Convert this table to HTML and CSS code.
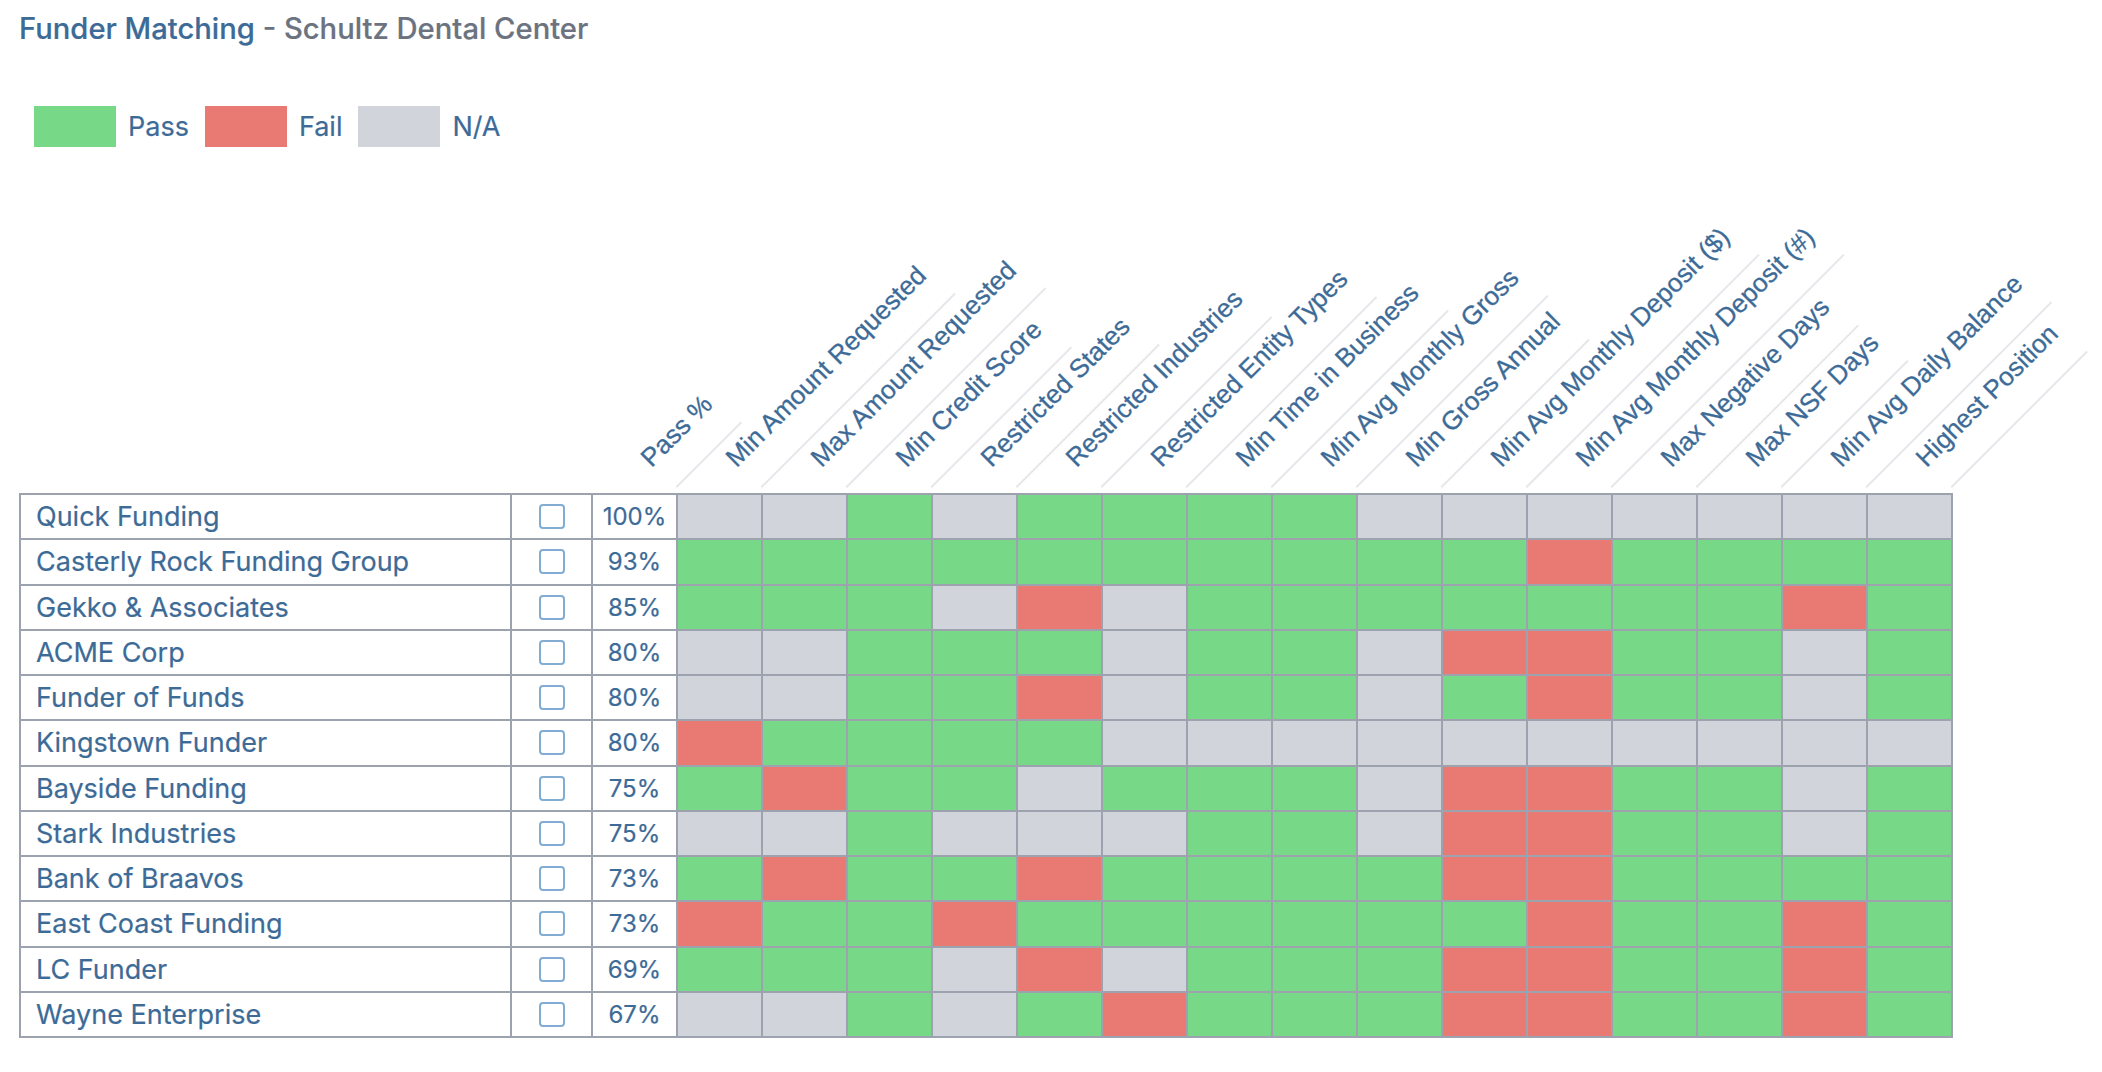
FILE: index.html
```html
<!DOCTYPE html>
<html lang="en">
<head>
<meta charset="utf-8">
<title>Funder Matching - Schultz Dental Center</title>
<link rel="stylesheet" href="styles.css">
</head>
<body>
<div class="page">
  <h1 class="title">Funder Matching <span class="sub">- Schultz Dental Center</span></h1>

  <div class="legend">
    <span class="sw g"></span><span class="lt">Pass</span>
    <span class="sw r"></span><span class="lt">Fail</span>
    <span class="sw n"></span><span class="lt">N/A</span>
  </div>

  <div class="head">
    <div class="hcell"></div>
    <div class="hcell"></div>
    <div class="hcell"><div class="anchor"><div class="lbl">Pass %</div></div></div>
    <div class="hcell"><div class="anchor"><div class="lbl">Min Amount Requested</div></div></div>
    <div class="hcell"><div class="anchor"><div class="lbl">Max Amount Requested</div></div></div>
    <div class="hcell"><div class="anchor"><div class="lbl">Min Credit Score</div></div></div>
    <div class="hcell"><div class="anchor"><div class="lbl">Restricted States</div></div></div>
    <div class="hcell"><div class="anchor"><div class="lbl">Restricted Industries</div></div></div>
    <div class="hcell"><div class="anchor"><div class="lbl">Restricted Entity Types</div></div></div>
    <div class="hcell"><div class="anchor"><div class="lbl">Min Time in Business</div></div></div>
    <div class="hcell"><div class="anchor"><div class="lbl">Min Avg Monthly Gross</div></div></div>
    <div class="hcell"><div class="anchor"><div class="lbl">Min Gross Annual</div></div></div>
    <div class="hcell"><div class="anchor"><div class="lbl">Min Avg Monthly Deposit ($)</div></div></div>
    <div class="hcell"><div class="anchor"><div class="lbl">Min Avg Monthly Deposit (#)</div></div></div>
    <div class="hcell"><div class="anchor"><div class="lbl">Max Negative Days</div></div></div>
    <div class="hcell"><div class="anchor"><div class="lbl">Max NSF Days</div></div></div>
    <div class="hcell"><div class="anchor"><div class="lbl">Min Avg Daily Balance</div></div></div>
    <div class="hcell"><div class="anchor"><div class="lbl">Highest Position</div></div></div>
  </div>

  <div class="grid">
    <div class="name">Quick Funding</div><div class="chk"><span class="box"></span></div><div class="pct">100%</div>
    <i class="n"></i><i class="n"></i><i class="g"></i><i class="n"></i><i class="g"></i><i class="g"></i><i class="g"></i><i class="g"></i><i class="n"></i><i class="n"></i><i class="n"></i><i class="n"></i><i class="n"></i><i class="n"></i><i class="n"></i>

    <div class="name">Casterly Rock Funding Group</div><div class="chk"><span class="box"></span></div><div class="pct">93%</div>
    <i class="g"></i><i class="g"></i><i class="g"></i><i class="g"></i><i class="g"></i><i class="g"></i><i class="g"></i><i class="g"></i><i class="g"></i><i class="g"></i><i class="r"></i><i class="g"></i><i class="g"></i><i class="g"></i><i class="g"></i>

    <div class="name">Gekko &amp; Associates</div><div class="chk"><span class="box"></span></div><div class="pct">85%</div>
    <i class="g"></i><i class="g"></i><i class="g"></i><i class="n"></i><i class="r"></i><i class="n"></i><i class="g"></i><i class="g"></i><i class="g"></i><i class="g"></i><i class="g"></i><i class="g"></i><i class="g"></i><i class="r"></i><i class="g"></i>

    <div class="name">ACME Corp</div><div class="chk"><span class="box"></span></div><div class="pct">80%</div>
    <i class="n"></i><i class="n"></i><i class="g"></i><i class="g"></i><i class="g"></i><i class="n"></i><i class="g"></i><i class="g"></i><i class="n"></i><i class="r"></i><i class="r"></i><i class="g"></i><i class="g"></i><i class="n"></i><i class="g"></i>

    <div class="name">Funder of Funds</div><div class="chk"><span class="box"></span></div><div class="pct">80%</div>
    <i class="n"></i><i class="n"></i><i class="g"></i><i class="g"></i><i class="r"></i><i class="n"></i><i class="g"></i><i class="g"></i><i class="n"></i><i class="g"></i><i class="r"></i><i class="g"></i><i class="g"></i><i class="n"></i><i class="g"></i>

    <div class="name">Kingstown Funder</div><div class="chk"><span class="box"></span></div><div class="pct">80%</div>
    <i class="r"></i><i class="g"></i><i class="g"></i><i class="g"></i><i class="g"></i><i class="n"></i><i class="n"></i><i class="n"></i><i class="n"></i><i class="n"></i><i class="n"></i><i class="n"></i><i class="n"></i><i class="n"></i><i class="n"></i>

    <div class="name">Bayside Funding</div><div class="chk"><span class="box"></span></div><div class="pct">75%</div>
    <i class="g"></i><i class="r"></i><i class="g"></i><i class="g"></i><i class="n"></i><i class="g"></i><i class="g"></i><i class="g"></i><i class="n"></i><i class="r"></i><i class="r"></i><i class="g"></i><i class="g"></i><i class="n"></i><i class="g"></i>

    <div class="name">Stark Industries</div><div class="chk"><span class="box"></span></div><div class="pct">75%</div>
    <i class="n"></i><i class="n"></i><i class="g"></i><i class="n"></i><i class="n"></i><i class="n"></i><i class="g"></i><i class="g"></i><i class="n"></i><i class="r"></i><i class="r"></i><i class="g"></i><i class="g"></i><i class="n"></i><i class="g"></i>

    <div class="name">Bank of Braavos</div><div class="chk"><span class="box"></span></div><div class="pct">73%</div>
    <i class="g"></i><i class="r"></i><i class="g"></i><i class="g"></i><i class="r"></i><i class="g"></i><i class="g"></i><i class="g"></i><i class="g"></i><i class="r"></i><i class="r"></i><i class="g"></i><i class="g"></i><i class="g"></i><i class="g"></i>

    <div class="name">East Coast Funding</div><div class="chk"><span class="box"></span></div><div class="pct">73%</div>
    <i class="r"></i><i class="g"></i><i class="g"></i><i class="r"></i><i class="g"></i><i class="g"></i><i class="g"></i><i class="g"></i><i class="g"></i><i class="g"></i><i class="r"></i><i class="g"></i><i class="g"></i><i class="r"></i><i class="g"></i>

    <div class="name">LC Funder</div><div class="chk"><span class="box"></span></div><div class="pct">69%</div>
    <i class="g"></i><i class="g"></i><i class="g"></i><i class="n"></i><i class="r"></i><i class="n"></i><i class="g"></i><i class="g"></i><i class="g"></i><i class="r"></i><i class="r"></i><i class="g"></i><i class="g"></i><i class="r"></i><i class="g"></i>

    <div class="name">Wayne Enterprise</div><div class="chk"><span class="box"></span></div><div class="pct">67%</div>
    <i class="n"></i><i class="n"></i><i class="g"></i><i class="n"></i><i class="g"></i><i class="r"></i><i class="g"></i><i class="g"></i><i class="g"></i><i class="r"></i><i class="r"></i><i class="g"></i><i class="g"></i><i class="r"></i><i class="g"></i>
  </div>
</div>
</body>
</html>
```
FILE: styles.css
```css
* { box-sizing: border-box; }

body {
  margin: 0;
  background: #ffffff;
  font-family: Inter, "Noto Sans", Arial, sans-serif;
  color: #3d6b97;
}

.page {
  padding: 11px 0 0 19px;
}

.title {
  margin: 0;
  font-size: 29.2px;
  line-height: 36px;
  font-weight: 500;
  color: #3d6b97;
  -webkit-text-stroke: 0.2px currentColor;
}

.title .sub {
  color: #6b7280;
}

.legend {
  display: flex;
  align-items: center;
  height: 41px;
  margin: 59px 0 0 15px;
}

.sw {
  display: block;
  width: 82px;
  height: 41px;
}

.lt {
  font-size: 27px;
  margin: 0 16px 0 12px;
  -webkit-text-stroke: 0.2px currentColor;
}

.head {
  display: grid;
  grid-template-columns: 489px 79px 83px repeat(15, 83px);
  column-gap: 2px;
  padding: 0 2px 0 3px;
  height: 341px;
}

.hcell {
  display: flex;
  justify-content: flex-end;
  align-items: flex-end;
}

.anchor {
  width: 0;
  height: 0;
}

.lbl {
  width: max-content;
  white-space: nowrap;
  font-family: "Liberation Sans", Arial, sans-serif;
  font-size: 26px;
  line-height: 30px;
  padding: 0 8px 24px 0;
  text-indent: -4px;
  border-bottom: 2px solid #e5e7eb;
  color: #3d6b97;
  -webkit-text-stroke: 0.3px currentColor;
  transform-origin: 0 0;
  transform: rotate(-45deg) translateY(-100%);
}

.grid {
  margin-top: 5px;
  display: grid;
  grid-template-columns: 489px 79px 83px repeat(15, 83px);
  grid-auto-rows: 43.25px;
  gap: 2px;
  padding: 2px;
  background: #9ca3af;
  width: max-content;
}

.grid i {
  display: block;
}

.name,
.chk,
.pct {
  background: #ffffff;
  display: flex;
  align-items: center;
  -webkit-text-stroke: 0.2px currentColor;
}

.name {
  font-size: 27px;
  padding-left: 15px;
}

.pct {
  font-size: 24px;
}

.chk,
.pct {
  justify-content: center;
}

.box {
  display: block;
  width: 26px;
  height: 25px;
  border: 2px solid #82acd1;
  border-radius: 4px;
  background: #ffffff;
}

.g { background: #77d887; }
.r { background: #e87973; }
.n { background: #d1d5db; }
```
